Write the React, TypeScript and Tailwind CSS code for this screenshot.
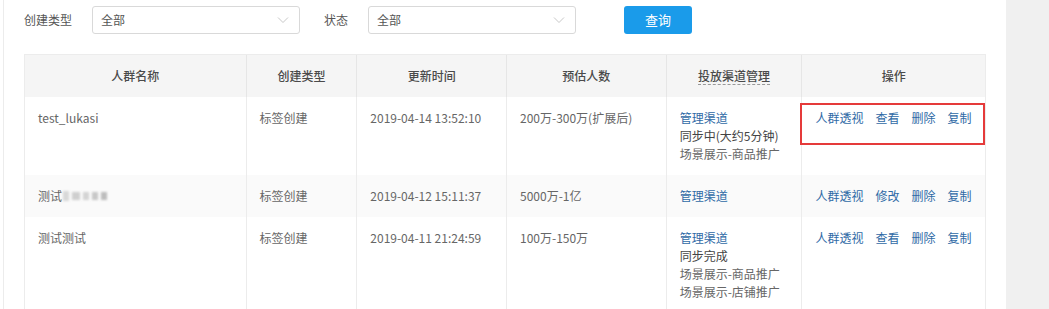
const font = { fontFamily: '"Noto Sans CJK SC", "Noto Sans", sans-serif' };

type Row = {
  name: React.ReactNode;
  type: string;
  time: string;
  size: string;
  channel: string[];
  actions: string[];
  striped?: boolean;
  boxed?: boolean;
};

const rows: Row[] = [
  {
    name: 'test_lukasi',
    type: '标签创建',
    time: '2019-04-14 13:52:10',
    size: '200万-300万(扩展后)',
    channel: ['同步中(大约5分钟)', '场景展示-商品推广'],
    actions: ['人群透视', '查看', '删除', '复制'],
    boxed: true,
  },
  {
    name: (
      <span className="flex items-center">
        测试
        <span className="ml-[1px] inline-flex gap-[3px] items-center">
          <span className="w-[6px] h-[10px] bg-[#d8d8d8] blur-[1px]" />
          <span className="w-[8px] h-[8px] bg-[#cfcfcf] blur-[1px]" />
          <span className="w-[6px] h-[8px] bg-[#d4d4d4] blur-[1px]" />
          <span className="w-[6px] h-[8px] bg-[#c8c8c8] blur-[1px]" />
          <span className="w-[6px] h-[8px] bg-[#bdbdbd] blur-[1px]" />
        </span>
      </span>
    ),
    type: '标签创建',
    time: '2019-04-12 15:11:37',
    size: '5000万-1亿',
    channel: [],
    actions: ['人群透视', '修改', '删除', '复制'],
    striped: true,
  },
  {
    name: '测试测试',
    type: '标签创建',
    time: '2019-04-11 21:24:59',
    size: '100万-150万',
    channel: ['同步完成', '场景展示-商品推广', '场景展示-店铺推广'],
    actions: ['人群透视', '查看', '删除', '复制'],
  },
];

function Select() {
  return (
    <div className="w-[208px] h-[28px] border border-[#d9d9d9] rounded-[3px] bg-white flex items-center justify-between pl-[8px] pr-[10px] text-[12px] text-[#555]">
      <span>全部</span>
      <svg width="12" height="8" viewBox="0 0 12 8" fill="none">
        <path d="M1 1.5 L6 6.5 L11 1.5" stroke="#c8c8c8" strokeWidth="1" />
      </svg>
    </div>
  );
}

const cols = ['w-[221px]', 'w-[111px]', 'w-[150px]', 'w-[160px]', 'w-[136px]', 'w-[184px]'];

export default function App() {
  return (
    <div className="flex w-[1049px] h-[309px] overflow-hidden bg-white" style={font}>
      <div className="w-[3px] shrink-0" />
      <div className="flex-1 border-l border-[#ececec] pl-[20px]">
        {/* Filters */}
        <div className="flex items-center h-[28px] mt-[6px] text-[12px] text-[#555]">
          <span className="w-[48px]">创建类型</span>
          <div className="ml-[20px]">
            <Select />
          </div>
          <span className="ml-[24px] w-[24px]">状态</span>
          <div className="ml-[20px]">
            <Select />
          </div>
          <button className="ml-[48px] w-[68px] h-[28px] rounded-[3px] bg-[#1a9bea] text-white text-[13px]">
            查询
          </button>
        </div>

        {/* Table */}
        <div className="mt-[20px] w-[962px] border border-[#ececec] text-[12px] leading-[18px]">
          <div className="flex h-[42px] bg-[#f5f5f5] text-[#4a4a4a] font-medium">
            {['人群名称', '创建类型', '更新时间', '预估人数', '投放渠道管理', '操作'].map((h, i) => (
              <div
                key={h}
                className={`${cols[i]} flex items-center justify-center ${i > 0 ? 'border-l border-[#e6e6e6]' : ''}`}
              >
                {i === 4 ? (
                  <span className="border-b border-dashed border-[#999] leading-[17px]">{h}</span>
                ) : (
                  h
                )}
              </div>
            ))}
          </div>
          {rows.map((r, idx) => (
            <div key={idx} className={`flex ${r.striped ? 'bg-[#fafafa]' : 'bg-white'}`}>
              <div className={`${cols[0]} px-[13px] py-[12px] text-[#666]`}>{r.name}</div>
              <div className={`${cols[1]} px-[13px] py-[12px] text-[#666] border-l border-[#ececec]`}>{r.type}</div>
              <div className={`${cols[2]} px-[13px] py-[12px] text-[#666] border-l border-[#ececec]`}>{r.time}</div>
              <div className={`${cols[3]} px-[13px] py-[12px] text-[#666] border-l border-[#ececec]`}>{r.size}</div>
              <div className={`${cols[4]} px-[13px] py-[12px] border-l border-[#ececec] flex flex-col`}>
                <span className="text-[#2f6aa6]">管理渠道</span>
                {r.channel.map((c, i) => (
                  <span key={c} className={i === 0 ? 'text-[#444]' : 'text-[#666]'}>
                    {c}
                  </span>
                ))}
              </div>
              <div className={`${cols[5]} relative px-[13px] py-[12px] border-l border-[#ececec]`}>
                <div className="flex gap-[12px] text-[#2f6aa6]">
                  {r.actions.map((a) => (
                    <span key={a}>{a}</span>
                  ))}
                </div>
                {r.boxed && (
                  <div className="absolute left-[-2px] top-[6px] w-[185px] h-[42px] border-2 border-[#e53a3a]" />
                )}
              </div>
            </div>
          ))}
        </div>
      </div>
      <div className="w-[43px] shrink-0 bg-[#f0f0f0]" />
    </div>
  );
}
